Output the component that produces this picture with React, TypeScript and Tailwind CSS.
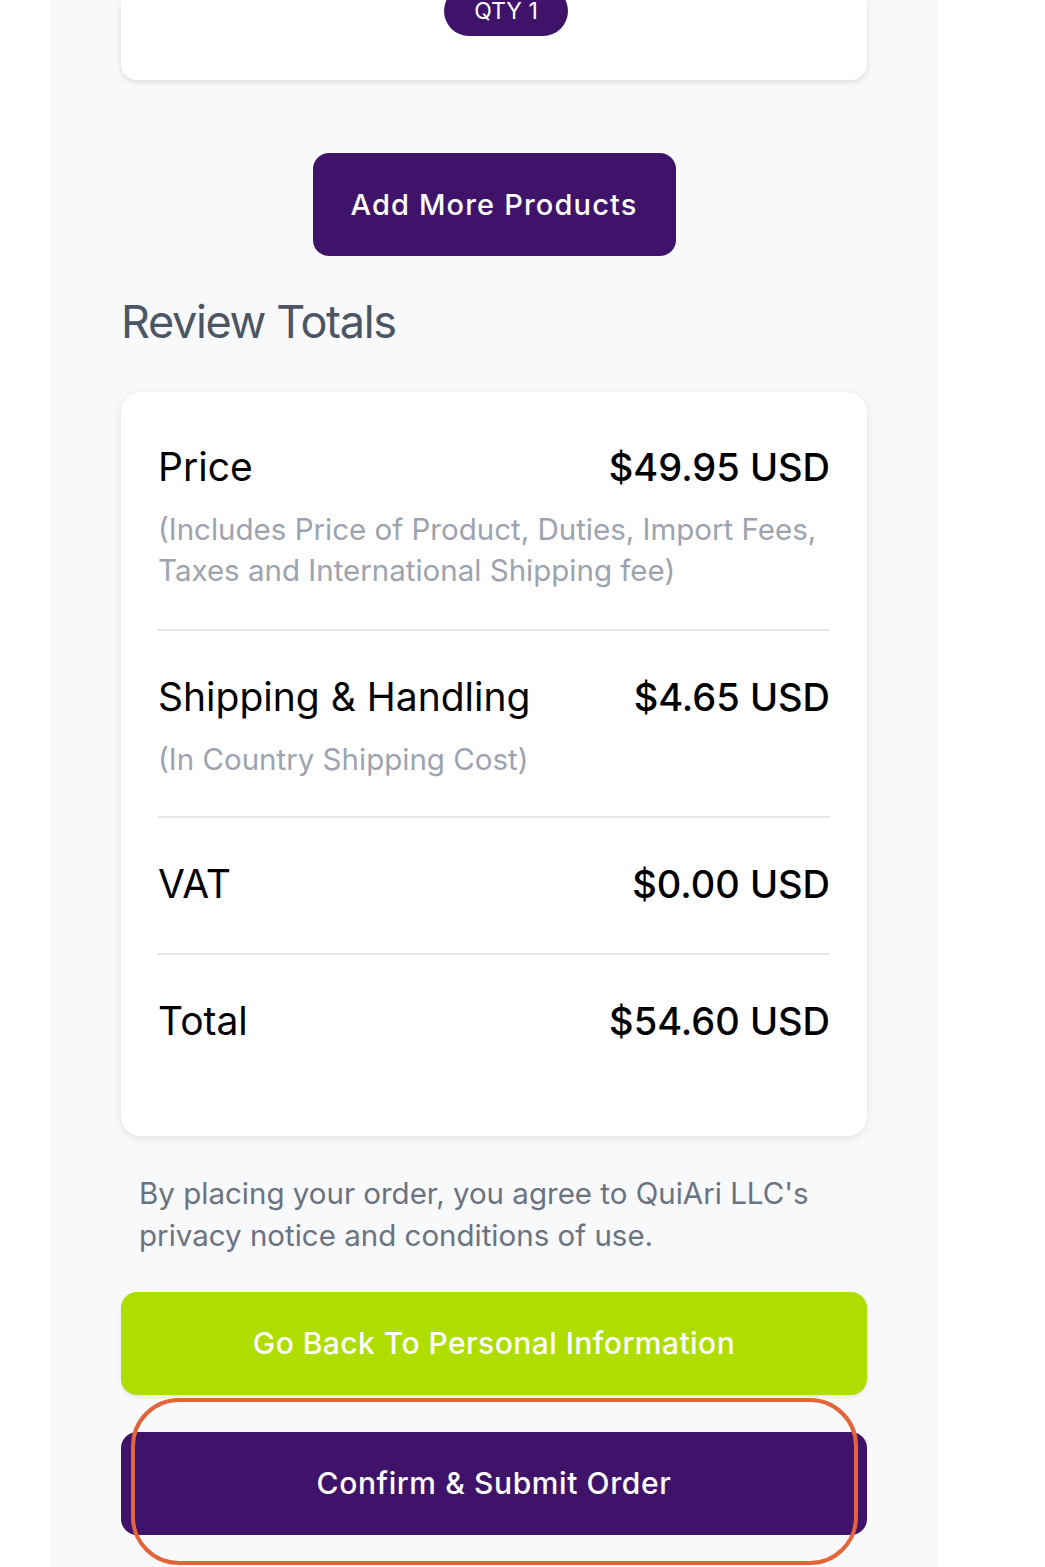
import React from "react";

const font = { fontFamily: "Inter, Roboto, 'Noto Sans', sans-serif" };

function Row({
  label,
  value,
  sub,
  className,
}: {
  label: string;
  value: string;
  sub?: React.ReactNode;
  className: string;
}) {
  return (
    <div className={className}>
      <div className="flex items-center justify-between">
        <span className="text-[39px] leading-[48px] text-black font-normal">{label}</span>
        <span className="text-[38px] leading-[48px] text-black font-medium">{value}</span>
      </div>
      {sub && (
        <div className="mt-[18px] text-[29.5px] leading-[41px] text-[#9ca3af]">{sub}</div>
      )}
    </div>
  );
}

export default function App() {
  return (
    <div className="w-full h-[1567px] bg-white overflow-hidden" style={font}>
      <div className="relative ml-[50px] w-[888px] h-[1567px] bg-[#f8f9fb] px-[71px] flex flex-col">
        {/* top product card (partially visible) */}
        <div className="h-[80px] bg-white rounded-b-[16px] shadow-[0_2px_6px_rgba(0,0,0,0.12)] flex items-start">
          <div className="ml-[323px] -mt-[14px] h-[50px] w-[124px] rounded-full bg-[#3f1369] text-white text-[23px] flex items-center justify-center">
            QTY 1
          </div>
        </div>

        <button className="mt-[73px] mx-auto w-[363px] h-[103px] rounded-[16px] bg-[#3f1369] text-white text-[29px] font-medium tracking-[0.04em]">
          Add More Products
        </button>

        <h2 className="mt-[38px] text-[45px] leading-[56px] text-[#4b5563] font-normal tracking-[-0.03em]">Review Totals</h2>

        <div className="mt-[42px] bg-white rounded-[20px] shadow-[0_2px_8px_rgba(0,0,0,0.10)] px-[37px] pt-[9px] pb-[49px]">
          <Row
            className="pt-[42px] pb-[38px] border-b-2 border-[#e5e7eb]"
            label="Price"
            value="$49.95 USD"
            sub={
              <>
                (Includes Price of Product, Duties, Import Fees,
                <br />
                Taxes and International Shipping fee)
              </>
            }
          />
          <Row
            className="pt-[42px] pb-[36px] border-b-2 border-[#e5e7eb]"
            label="Shipping & Handling"
            value="$4.65 USD"
            sub="(In Country Shipping Cost)"
          />
          <Row className="pt-[42px] pb-[45px] border-b-2 border-[#e5e7eb]" label="VAT" value="$0.00 USD" />
          <Row className="pt-[42px] pb-[42px]" label="Total" value="$54.60 USD" />
        </div>

        <p className="mt-[36px] px-[18px] text-[29.5px] leading-[42px] text-[#6b7280]">
          By placing your order, you agree to QuiAri LLC's
          <br />
          privacy notice and conditions of use.
        </p>

        <button className="mt-[36px] w-full h-[103px] rounded-[16px] bg-[#aedd00] text-white text-[30px] font-medium tracking-[0.015em] shadow-[0_2px_4px_rgba(0,0,0,0.08)]">
          Go Back To Personal Information
        </button>

        <button className="mt-[37px] w-full h-[103px] rounded-[16px] bg-[#3f1369] text-white text-[30px] font-medium tracking-[0.02em]">
          Confirm &amp; Submit Order
        </button>

        {/* annotation highlight */}
        <div className="absolute left-[81px] top-[1398px] w-[727px] h-[167px] rounded-[48px] border-[4px] border-[#e4643a] pointer-events-none" />
      </div>
    </div>
  );
}
